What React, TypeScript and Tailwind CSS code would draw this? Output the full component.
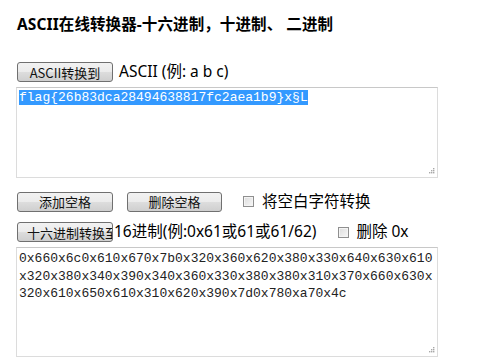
import React from "react";

const SANS = "font-['Noto_Sans','Noto_Sans_CJK_SC',sans-serif]";

function WinButton({ children, className = "" }: { children: React.ReactNode; className?: string }) {
  return (
    <button
      type="button"
      className={`flex h-[20px] shrink-0 items-center overflow-hidden whitespace-nowrap rounded-[3px] border border-[#707070] bg-[linear-gradient(#f2f2f2,#ebebeb_50%,#dddddd_50%,#cfcfcf)] font-['Noto_Sans_CJK_SC',sans-serif] text-[13px] leading-none text-[#111] ${className}`}
    >
      {children}
    </button>
  );
}

function CheckBox() {
  return (
    <span className="block h-[11px] w-[11px] shrink-0 border border-[#8f8f8f] bg-[linear-gradient(135deg,#dcdcdc,#f7f7f7)] shadow-[inset_0_0_0_1px_#f4f4f4]" />
  );
}

function Grip() {
  return (
    <svg className="absolute bottom-[2px] right-[2px]" width="7" height="7" viewBox="0 0 7 7">
      <g fill="#a8a8a8">
        <rect x="5" y="0" width="1.4" height="1.4" />
        <rect x="3" y="2" width="1.4" height="1.4" />
        <rect x="5" y="2" width="1.4" height="1.4" />
        <rect x="1" y="4" width="1.4" height="1.4" />
        <rect x="3" y="4" width="1.4" height="1.4" />
        <rect x="5" y="4" width="1.4" height="1.4" />
      </g>
    </svg>
  );
}

function TextBox({ children, className = "" }: { children: React.ReactNode; className?: string }) {
  return (
    <div
      className={`relative mt-[5px] w-[422px] border border-[#dcdcdc] border-t-[#c8c8c8] bg-white px-[2px] pt-[1px] font-['Liberation_Mono','Noto_Sans_CJK_SC',monospace] text-[13px] leading-[17.5px] text-[#222] ${className}`}
    >
      {children}
      <Grip />
    </div>
  );
}

export default function App() {
  return (
    <div className={`h-[363px] w-[494px] overflow-hidden bg-white pl-[16px] pt-[13px] text-black ${SANS}`}>
      <h1 className="h-[22px] pl-[1px] text-[15.5px] font-bold leading-[22px] tracking-[0.1px]">
        ASCII在线转换器-十六进制，十进制、 二进制
      </h1>

      {/* ASCII input */}
      <div className="mt-[27px] flex h-[20px] items-center pl-[1px]">
        <WinButton className="w-[96px] justify-center font-['Liberation_Serif','Noto_Sans_CJK_SC',serif]">
          ASCII转换到
        </WinButton>
        <span className="ml-[6px] text-[15.5px] leading-none">ASCII (例: a b c)</span>
      </div>
      <TextBox className="h-[91px]">
        <span className="bg-[#3399ff] text-white">flag{"{"}26b83dca28494638817fc2aea1b9{"}"}x§L</span>
      </TextBox>

      {/* spacing options */}
      <div className="mt-[13px] flex h-[21px] items-center pl-[1px]">
        <WinButton className="w-[96px] justify-center">添加空格</WinButton>
        <WinButton className="ml-[14px] w-[95px] justify-center">删除空格</WinButton>
        <span className="ml-[21px]">
          <CheckBox />
        </span>
        <span className="ml-[8px] text-[15.5px] leading-none">将空白字符转换</span>
      </div>

      {/* hex input */}
      <div className="mt-[10px] flex h-[20px] items-center pl-[1px]">
        <WinButton className="w-[96px] justify-start pl-[9px]">十六进制转换至</WinButton>
        <span className="ml-[1px] text-[15.5px] leading-none">16进制(例:0x61或61或61/62)</span>
        <span className="ml-[22px]">
          <CheckBox />
        </span>
        <span className="ml-[7px] text-[15.5px] leading-none">删除 0x</span>
      </div>
      <TextBox className="h-[110px] pt-[2px]">
        <div>0x660x6c0x610x670x7b0x320x360x620x380x330x640x630x610</div>
        <div>x320x380x340x390x340x360x330x380x380x310x370x660x630x</div>
        <div>320x610x650x610x310x620x390x7d0x780xa70x4c</div>
      </TextBox>
    </div>
  );
}
